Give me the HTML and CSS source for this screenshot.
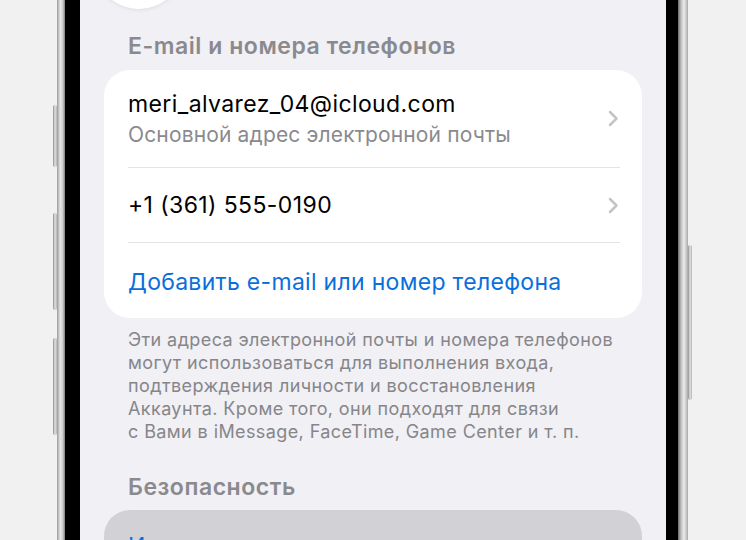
FILE: index.html
```html
<!DOCTYPE html>
<html lang="ru">
<head>
  <meta charset="UTF-8" />
  <meta name="viewport" content="width=device-width, initial-scale=1.0"/>
  <title>Apple ID</title>
  <link rel="stylesheet" href="styles.css">
</head>
<body>

  <!-- Phone -->
  <div class="phone">
    <span class="side-btn action"></span>
    <span class="side-btn vol-up"></span>
    <span class="side-btn vol-down"></span>
    <span class="side-btn power"></span>

    <div class="bezel">
      <div class="screen">

        <div class="avatar"></div>

        <h2 class="group-title">E-mail и номера телефонов</h2>

        <div class="card">
          <div class="row row-tall">
            <div class="row-text">
              <p class="row-main">meri_alvarez_04@icloud.com</p>
              <p class="row-sub">Основной адрес электронной почты</p>
            </div>
            <svg class="chevron" width="11" height="17" viewBox="0 0 11 17">
              <path d="M2 2 L8.5 8.5 L2 15" fill="none" stroke="#c4c4c7" stroke-width="2.5" stroke-linecap="round" stroke-linejoin="round"/>
            </svg>
          </div>
          <div class="row">
            <div class="row-text">
              <p class="row-main">+1 (361) 555-0190</p>
            </div>
            <svg class="chevron" width="11" height="17" viewBox="0 0 11 17">
              <path d="M2 2 L8.5 8.5 L2 15" fill="none" stroke="#c4c4c7" stroke-width="2.5" stroke-linecap="round" stroke-linejoin="round"/>
            </svg>
          </div>
          <div class="row row-last">
            <p class="row-link">Добавить e-mail или номер телефона</p>
          </div>
        </div>

        <p class="footnote">
          Эти адреса электронной почты и номера телефонов<br>
          могут использоваться для выполнения входа,<br>
          подтверждения личности и восстановления<br>
          Аккаунта. Кроме того, они подходят для связи<br>
          с Вами в iMessage, FaceTime, Game Center и т. п.
        </p>

        <h2 class="group-title security">Безопасность</h2>

        <div class="card card-pressed">
          <div class="row row-last">
            <p class="row-link">Изменить пароль</p>
          </div>
        </div>

      </div>
    </div>
  </div>

</body>
</html>
```

FILE: styles.css
```css
body {
  margin: 0;
  background-color: #f1f1f1;
  font-family: Inter, "Noto Sans", sans-serif;
  overflow: hidden;
  height: 540px;
}

p, h2 {
  margin: 0;
}

/* Phone frame */
.phone {
  position: relative;
  margin-left: 57px;
  width: 613px;
  height: 640px;
  padding: 0 10px 0 8px;
  background:
    linear-gradient(to right, #9a9a9a, #e6e6e6 40%, #cfcfcf 70%, #7d7d7d) left / 8px 100% no-repeat,
    linear-gradient(to right, #6f6f6f, #bdbdbd 30%, #ececec 60%, #a8a8a8) right / 10px 100% no-repeat;
}

.side-btn {
  position: absolute;
  width: 4px;
  border-radius: 2px;
  background: linear-gradient(to right, #8c8c8c, #e2e2e2, #b4b4b4);
}

.action { left: -4px; top: 105px; height: 62px; }
.vol-up { left: -4px; top: 213px; height: 97px; }
.vol-down { left: -4px; top: 338px; height: 97px; }
.power { right: -4px; top: 245px; height: 155px; }

.bezel {
  background-color: #000;
  padding: 0 12px 0 15px;
  height: 100%;
}

.screen {
  background-color: #f0f0f5;
  height: 100%;
  padding: 0 24px;
  overflow: hidden;
}

.avatar {
  width: 90px;
  height: 90px;
  margin: -81px 0 0 -10px;
  border-radius: 50%;
  background-color: #fff;
  box-shadow: 0 1px 4px rgba(0,0,0,0.08);
}

.group-title {
  font-size: 23px;
  font-weight: 600;
  line-height: 28px;
  letter-spacing: 0.55px;
  color: #8a8a8e;
  padding-left: 24px;
  margin-top: 23px;
  margin-bottom: 10px;
}

.group-title.security {
  margin-top: 30px;
  margin-bottom: 9px;
}

/* Cards */
.card {
  background-color: #fff;
  border-radius: 26px;
  padding: 0 22px 0 24px;
}

.card-pressed {
  background-color: #d1d1d6;
}

.row {
  display: flex;
  align-items: center;
  justify-content: space-between;
  height: 74px;
  border-bottom: 1px solid #e3e3e6;
}

.row-tall {
  height: 97px;
}

.row-last {
  border-bottom: none;
  height: 75px;
}

.row-main {
  font-size: 23px;
  line-height: 28px;
  letter-spacing: 0.4px;
  color: #000;
}

.row-tall .row-text {
  margin-top: 2px;
}

.row-sub {
  font-size: 21px;
  line-height: 28px;
  letter-spacing: 0.15px;
  color: #8a8a8e;
  margin-top: 3px;
}

.chevron {
  margin-right: 1px;
}

.row-link {
  font-size: 23px;
  line-height: 28px;
  letter-spacing: 0.3px;
  color: #0a6fdc;
  margin-top: 3px;
}

.card-pressed .row-link {
  margin-top: -4px;
}

.footnote {
  font-size: 18px;
  line-height: 23px;
  letter-spacing: 0.4px;
  color: #86868a;
  padding-left: 24px;
  margin-top: 10px;
}
```
